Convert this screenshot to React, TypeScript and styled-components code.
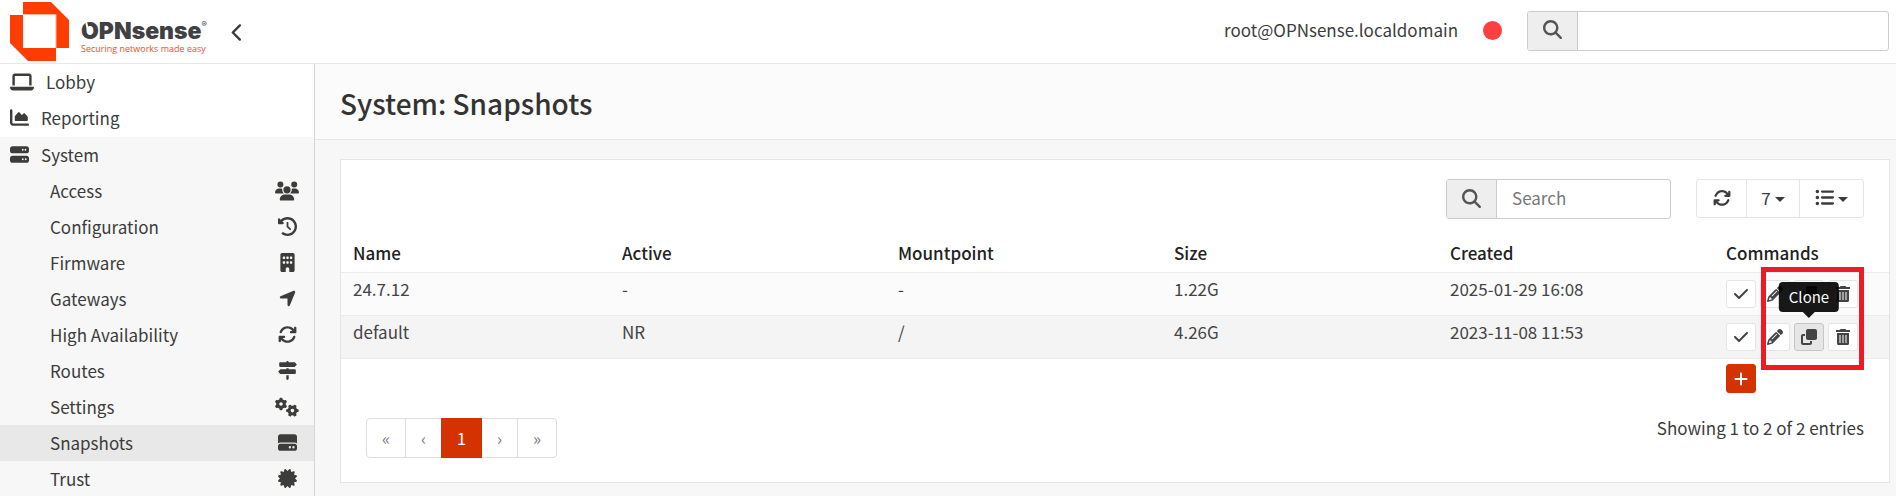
import React from "react";
import styled, { createGlobalStyle, css } from "styled-components";
import {
  FaArrowsRotate,
  FaBuilding,
  FaCertificate,
  FaChartArea,
  FaCheck,
  FaChevronLeft,
  FaClockRotateLeft,
  FaClone,
  FaGears,
  FaHardDrive,
  FaLaptop,
  FaListUl,
  FaLocationArrow,
  FaMagnifyingGlass,
  FaPencil,
  FaPlus,
  FaServer,
  FaSignsPost,
  FaUsers,
} from "react-icons/fa6";

const GlobalStyle = createGlobalStyle`
  *, *::before, *::after { box-sizing: border-box; }
  body {
    margin: 0;
    background: #f7f7f7;
    color: #3c3c3b;
    font-family: "Noto Sans CJK SC", "Open Sans", sans-serif;
    font-size: 17px;
    line-height: 24px;
  }
  #root { height: 100vh; overflow: hidden; }
  button, input { font: inherit; color: inherit; }
  svg { display: block; flex: none; }
`;

const Page = styled.div`
  display: flex;
  flex-direction: column;
  min-height: 100vh;
`;

const Header = styled.header`
  display: flex;
  align-items: center;
  height: 64px;
  padding: 0 7px 2px 10px;
  background: #fff;
  border-bottom: 1px solid #e9e9e9;
`;

const Brand = styled.a`
  display: flex;
  align-items: center;
  gap: 12px;
  color: #3c3c3b;
  text-decoration: none;
`;

const BrandText = styled.span`
  display: flex;
  flex-direction: column;
  width: 130px;
  padding-top: 15px;
`;

const Wordmark = styled.span`
  position: relative;
  display: flex;
  font-family: Inter, sans-serif;
  font-size: 23px;
  font-weight: 900;
  line-height: 22px;
  color: #414042;

  sup {
    font-size: 8px;
    font-weight: 400;
    line-height: 8px;
  }

  &::after {
    content: "";
    position: absolute;
    top: 2px;
    left: 5px;
    width: 2px;
    height: 8px;
    background: #fff;
    transform: rotate(-12deg);
  }
`;

const Tagline = styled.span`
  font-family: "Open Sans", sans-serif;
  font-size: 9px;
  line-height: 14px;
  white-space: nowrap;
  color: #ff4a12;
`;

const CollapseButton = styled.button`
  margin-left: 13px;
  padding: 6px 4px 2px;
  border: 0;
  background: none;
`;

const HeaderTools = styled.div`
  display: flex;
  align-items: center;
  margin-left: auto;
`;

const UserName = styled.span`
  padding-bottom: 2px;
`;

const StatusDot = styled.span`
  width: 19px;
  height: 19px;
  margin: 0 25px;
  border-radius: 50%;
  background: #ff4040;
`;

const SearchGroup = styled.label<{ $width: number }>`
  display: flex;
  width: ${(p) => p.$width}px;
  height: 40px;
  border: 1px solid #ccc;
  border-radius: 3px;
  background: #fff;
  overflow: hidden;
`;

const SearchAddon = styled.span`
  display: flex;
  flex: none;
  align-items: center;
  justify-content: center;
  width: 50px;
  padding-bottom: 2px;
  border-right: 1px solid #ccc;
  background: #eee;
  color: #555;
`;

const SearchInput = styled.input`
  flex: 1;
  min-width: 0;
  padding: 0 15px 2px;
  border: 0;
  outline: 0;
  background: none;

  &::placeholder { color: #777; opacity: 1; }
`;

const Body = styled.div`
  display: flex;
  flex: 1;
`;

const Sidebar = styled.nav`
  flex: none;
  width: 315px;
  border-right: 1px solid #d6d6d6;
  background: #fff;
`;

const NavLink = styled.a`
  display: flex;
  align-items: center;
  height: 36px;
  padding: 0 0 1px 10px;
  color: #3c3c3b;
  text-decoration: none;
`;

const NavIcon = styled.span`
  margin-right: 12px;
`;

const NavGroup = styled.div`
  margin-top: 1px;
  background: #f7f7f7;
`;

const SubLink = styled.a<{ $active?: boolean }>`
  display: flex;
  align-items: center;
  justify-content: space-between;
  height: 36px;
  padding: 0 14px 1px 50px;
  background: ${(p) => (p.$active ? "#e8e8e8" : "transparent")};
  color: #3c3c3b;
  text-decoration: none;
`;

const SubIcon = styled.span`
  display: flex;
  justify-content: center;
  width: 26px;
`;

const Main = styled.main`
  flex: 1;
  min-width: 0;
`;

const PageHead = styled.div`
  height: 76px;
  padding: 21px 25px;
  border-bottom: 1px solid #e7e7e7;
  background: #fbfbfb;
`;

const Title = styled.h1`
  margin: 0;
  font-size: 28px;
  font-weight: 500;
  line-height: 36px;
  color: #333;
`;

const Content = styled.div`
  padding: 19px 6px 13px 25px;
`;

const Panel = styled.section`
  border: 1px solid #e5e5e5;
  background: #fff;
`;

const Toolbar = styled.div`
  display: flex;
  align-items: flex-start;
  justify-content: flex-end;
  gap: 25px;
  padding: 19px 25px 0 0;
`;

const ButtonGroup = styled.div`
  display: flex;
  height: 39px;
  border: 1px solid #e5e5e5;
  border-radius: 3px;
`;

const GroupButton = styled.button<{ $width: number }>`
  display: flex;
  align-items: center;
  justify-content: center;
  gap: 4px;
  width: ${(p) => p.$width}px;
  padding: 0 0 2px;
  border: 0;
  background: none;

  & + & { border-left: 1px solid #e5e5e5; }
`;

const Caret = styled.span`
  margin-top: 4px;
  border: 5px solid transparent;
  border-top-color: currentColor;
  border-bottom: 0;
`;

const TableArea = styled.div`
  position: relative;
`;

const Table = styled.table`
  width: 100%;
  margin-top: 16px;
  table-layout: fixed;
  border-collapse: separate;
  border-spacing: 0;
`;

const NameCol = styled.col`
  width: 269px;
`;

const CommandsCol = styled.col`
  width: 175px;
`;

const HeadCell = styled.th`
  padding: 6px 12px 7px;
  font-weight: 500;
  line-height: 24px;
  text-align: left;
  color: #222;
`;

const Cell = styled.td`
  padding: 5px 12px 7px;
  border-top: 1px solid #ebebeb;
  vertical-align: top;
  line-height: 22px;
  color: #444;
`;

const Row = styled.tr<{ $striped?: boolean }>`
  background: ${(p) => (p.$striped ? "#fbfbfb" : "#f4f4f4")};
`;

const FootCell = styled.td`
  padding: 5px 12px 0;
  border-top: 1px solid #ebebeb;
`;

const Commands = styled.div`
  display: flex;
  gap: 4px;
  padding-top: 2px;
`;

const CommandButton = styled.button<{ $active?: boolean; $primary?: boolean }>`
  position: relative;
  display: flex;
  align-items: center;
  justify-content: center;
  width: 30px;
  height: 28px;
  padding: 0;
  border: 1px solid #e5e5e5;
  border-radius: 3px;
  background: #fff;
  color: #444;

  ${(p) =>
    p.$active &&
    css`
      border-color: #c6c6c6;
      background: #e6e6e6;
    `}

  ${(p) =>
    p.$primary &&
    css`
      height: 29px;
      border-color: #d43200;
      background: #d43200;
      color: #fff;
    `}
`;

const Tooltip = styled.span`
  position: absolute;
  bottom: 38px;
  left: 50%;
  z-index: 1;
  padding: 3px 10px;
  border-radius: 4px;
  background: #000;
  color: #fff;
  font-size: 15px;
  line-height: 24px;
  opacity: 0.9;
  transform: translateX(-50%);

  &::after {
    content: "";
    position: absolute;
    top: 100%;
    left: 50%;
    border: 6px solid transparent;
    border-top-color: #000;
    border-bottom: 0;
    transform: translateX(-50%);
  }
`;

const Highlight = styled.div`
  position: absolute;
  top: 32px;
  right: 25px;
  z-index: 2;
  width: 103px;
  height: 103px;
  border: 5px solid #ed1c24;
  pointer-events: none;
`;

const Footer = styled.div`
  display: flex;
  align-items: flex-start;
  justify-content: space-between;
  padding: 25px 25px 24px;
`;

const Summary = styled.span`
  line-height: 20px;
`;

const Pagination = styled.div`
  display: flex;
  height: 40px;
  border: 1px solid #ddd;
  border-radius: 4px;
`;

const PageButton = styled.button<{ $current?: boolean; $wide?: boolean }>`
  box-sizing: content-box;
  width: ${(p) => (p.$wide ? 38 : 35)}px;
  padding: 0;
  border: 0;
  background: none;
  color: #777;

  & + & { border-left: 1px solid #ddd; }

  ${(p) =>
    p.$current &&
    css`
      && {
        width: 41px;
        margin: -1px 0;
        border: 0;
        background: #d43200;
        color: #fff;
      }
      && + button { border-left: 0; }
    `}
`;

const Logo = () => (
  <svg width="59" height="60" viewBox="0 0 59 60" aria-hidden="true">
    <path d="M13 1h28l18 18v28H46V14H13z" fill="#ff3d00" />
    <path d="M0 14h13v33h33v13H18L0 42z" fill="#ff3d00" />
    <path d="M13 13.5h33V47" fill="none" stroke="#ffb199" />
  </svg>
);

const TrashIcon = () => (
  <svg width="14" height="16" viewBox="0 0 14 16" fill="currentColor" aria-hidden="true">
    <path d="M4.5 0h5l.7 1H14v2H0V1h3.800z" />
    <path
      fillRule="evenodd"
      d="M1 4h12v10.500a1.500 1.500 0 0 1-1.500 1.500h-9A1.500 1.500 0 0 1 1 14.500zM3.500 6v8h1V6zM6.500 6v8h1V6zM9.500 6v8h1V6z"
    />
  </svg>
);

const topItems = [
  { label: "Lobby", icon: <FaLaptop size={24} height={19} /> },
  { label: "Reporting", icon: <FaChartArea size={19} /> },
];

const systemItems = [
  { label: "Access", icon: <FaUsers size={24} /> },
  { label: "Configuration", icon: <FaClockRotateLeft size={19} /> },
  { label: "Firmware", icon: <FaBuilding size={19} /> },
  { label: "Gateways", icon: <FaLocationArrow size={19} /> },
  { label: "High Availability", icon: <FaArrowsRotate size={19} /> },
  { label: "Routes", icon: <FaSignsPost size={19} /> },
  { label: "Settings", icon: <FaGears size={24} /> },
  { label: "Snapshots", icon: <FaHardDrive size={19} />, active: true },
  { label: "Trust", icon: <FaCertificate size={19} /> },
];

const snapshots = [
  { name: "24.7.12", active: "-", mount: "-", size: "1.22G", created: "2025-01-29 16:08" },
  { name: "default", active: "NR", mount: "/", size: "4.26G", created: "2023-11-08 11:53", hovered: true },
];

export default function App() {
  return (
    <>
      <GlobalStyle />
      <Page>
        <Header>
          <Brand href="#">
            <Logo />
            <BrandText>
              <Wordmark>
                OPNsense<sup>®</sup>
              </Wordmark>
              <Tagline>Securing networks made easy</Tagline>
            </BrandText>
          </Brand>
          <CollapseButton aria-label="Collapse menu">
            <FaChevronLeft size={19} />
          </CollapseButton>
          <HeaderTools>
            <UserName>root@OPNsense.localdomain</UserName>
            <StatusDot />
            <SearchGroup $width={362}>
              <SearchAddon>
                <FaMagnifyingGlass size={19} />
              </SearchAddon>
              <SearchInput type="text" aria-label="Search menu" />
            </SearchGroup>
          </HeaderTools>
        </Header>
        <Body>
          <Sidebar>
            {topItems.map((item) => (
              <NavLink key={item.label} href="#">
                <NavIcon>{item.icon}</NavIcon>
                {item.label}
              </NavLink>
            ))}
            <NavGroup>
              <NavLink href="#">
                <NavIcon>
                  <FaServer size={19} />
                </NavIcon>
                System
              </NavLink>
              {systemItems.map((item) => (
                <SubLink key={item.label} href="#" $active={item.active}>
                  {item.label}
                  <SubIcon>{item.icon}</SubIcon>
                </SubLink>
              ))}
            </NavGroup>
          </Sidebar>
          <Main>
            <PageHead>
              <Title>System: Snapshots</Title>
            </PageHead>
            <Content>
              <Panel>
                <Toolbar>
                  <SearchGroup $width={225}>
                    <SearchAddon>
                      <FaMagnifyingGlass size={19} />
                    </SearchAddon>
                    <SearchInput type="text" placeholder="Search" aria-label="Search" />
                  </SearchGroup>
                  <ButtonGroup>
                    <GroupButton $width={49} aria-label="Refresh">
                      <FaArrowsRotate size={18} />
                    </GroupButton>
                    <GroupButton $width={53}>
                      7<Caret />
                    </GroupButton>
                    <GroupButton $width={64} aria-label="Columns">
                      <FaListUl size={19} />
                      <Caret />
                    </GroupButton>
                  </ButtonGroup>
                </Toolbar>
                <TableArea>
                  <Table>
                    <colgroup>
                      <NameCol />
                      <col />
                      <col />
                      <col />
                      <col />
                      <CommandsCol />
                    </colgroup>
                    <thead>
                      <tr>
                        <HeadCell>Name</HeadCell>
                        <HeadCell>Active</HeadCell>
                        <HeadCell>Mountpoint</HeadCell>
                        <HeadCell>Size</HeadCell>
                        <HeadCell>Created</HeadCell>
                        <HeadCell>Commands</HeadCell>
                      </tr>
                    </thead>
                    <tbody>
                      {snapshots.map((s, i) => (
                        <Row key={s.name} $striped={i % 2 === 0}>
                          <Cell>{s.name}</Cell>
                          <Cell>{s.active}</Cell>
                          <Cell>{s.mount}</Cell>
                          <Cell>{s.size}</Cell>
                          <Cell>{s.created}</Cell>
                          <Cell>
                            <Commands>
                              <CommandButton aria-label="Activate">
                                <FaCheck size={16} />
                              </CommandButton>
                              <CommandButton aria-label="Edit">
                                <FaPencil size={16} />
                              </CommandButton>
                              <CommandButton aria-label="Clone" $active={s.hovered}>
                                <FaClone size={16} />
                                {s.hovered && <Tooltip role="tooltip">Clone</Tooltip>}
                              </CommandButton>
                              <CommandButton aria-label="Delete">
                                <TrashIcon />
                              </CommandButton>
                            </Commands>
                          </Cell>
                        </Row>
                      ))}
                    </tbody>
                    <tfoot>
                      <tr>
                        <FootCell colSpan={5} />
                        <FootCell>
                          <CommandButton $primary aria-label="Add">
                            <FaPlus size={16} />
                          </CommandButton>
                        </FootCell>
                      </tr>
                    </tfoot>
                  </Table>
                  <Highlight />
                </TableArea>
                <Footer>
                  <Pagination>
                    <PageButton $wide>«</PageButton>
                    <PageButton>‹</PageButton>
                    <PageButton $current>1</PageButton>
                    <PageButton>›</PageButton>
                    <PageButton $wide>»</PageButton>
                  </Pagination>
                  <Summary>Showing 1 to 2 of 2 entries</Summary>
                </Footer>
              </Panel>
            </Content>
          </Main>
        </Body>
      </Page>
    </>
  );
}
